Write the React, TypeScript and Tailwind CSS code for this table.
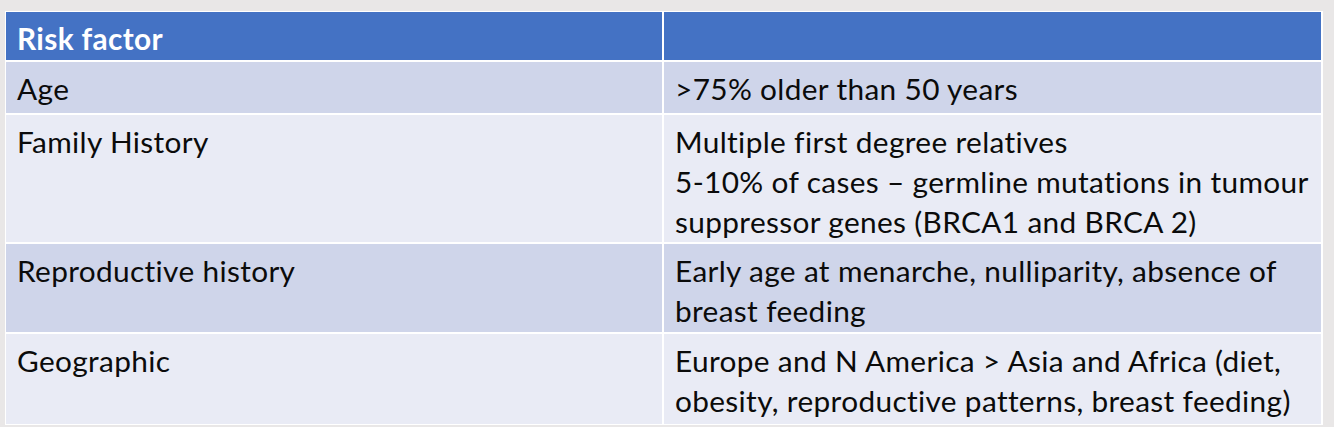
const rows = [
  { factor: "Age", detail: [">75% older than 50 years"], height: "h-[51px]", tone: "bg-[#cfd5ea]" },
  {
    factor: "Family History",
    detail: [
      "Multiple first degree relatives",
      "5-10% of cases – germline mutations in tumour",
      "suppressor genes (BRCA1 and BRCA 2)",
    ],
    height: "h-[127px]",
    tone: "bg-[#e9ebf5]",
  },
  {
    factor: "Reproductive history",
    detail: ["Early age at menarche, nulliparity, absence of", "breast feeding"],
    height: "h-[88px]",
    tone: "bg-[#cfd5ea]",
  },
  {
    factor: "Geographic",
    detail: [
      "Europe and N America > Asia and Africa (diet,",
      "obesity, reproductive patterns, breast feeding)",
    ],
    height: "h-[90px]",
    tone: "bg-[#e9ebf5]",
  },
];

const cell = "px-[11px] pt-[7px] leading-[40px] whitespace-nowrap overflow-hidden";

export default function App() {
  return (
    <div className="h-[427px] w-[1334px] overflow-hidden bg-[#e9e7e7] pt-[11px] pl-[5px] font-['Lato',sans-serif] text-[29.8px] tracking-[0.35px] text-[#0b0b0b] [font-variant-ligatures:none]">
      <div className="grid w-[1318px] grid-cols-[656px_657px] gap-[2px] bg-white p-px">
        <div className={`${cell} h-[48px] bg-[#4472c4] pt-[4px] font-bold text-white`}>Risk factor</div>
        <div className="h-[48px] bg-[#4472c4]" />
        {rows.map((row) => (
          <div key={row.factor} className="contents">
            <div className={`${cell} ${row.height} ${row.tone}`}>{row.factor}</div>
            <div className={`${cell} ${row.height} ${row.tone}`}>
              {row.detail.map((line) => (
                <div key={line}>{line}</div>
              ))}
            </div>
          </div>
        ))}
      </div>
    </div>
  );
}
